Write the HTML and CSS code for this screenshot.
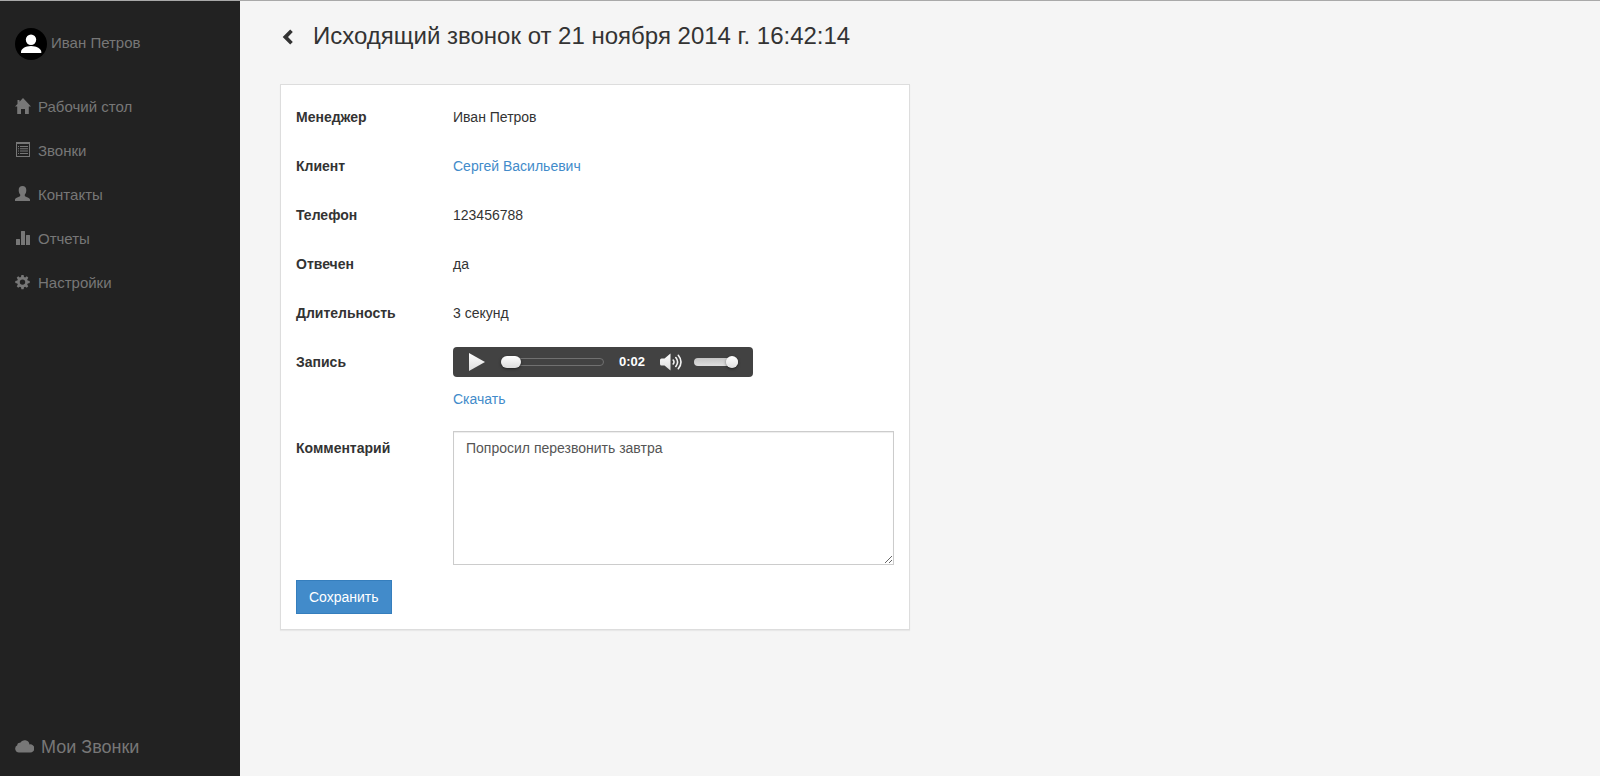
FILE: index.html
```html
<!DOCTYPE html>
<html lang="ru">
<head>
<meta charset="utf-8">
<meta name="viewport" content="width=device-width, initial-scale=1">
<title>Исходящий звонок</title>
<link rel="stylesheet" href="styles.css">
</head>
<body>
<div class="app">
  <aside class="sidebar">
    <a class="user" href="#">
      <svg class="avatar" viewBox="0 0 32 32" aria-hidden="true"><circle cx="16" cy="16" r="16" fill="#000"/><circle cx="16" cy="11.700" r="5.200" fill="#fff"/><path fill="#fff" d="M6 25v-1c0-3.200 4.400-6 10-6s10.300 2.800 10.300 6v1z"/></svg>
      <span>Иван Петров</span>
    </a>
    <nav class="nav">
      <a class="nav-link" href="#"><svg class="icon" viewBox="0 0 16 16" aria-hidden="true"><path d="M8 0l8 8.600h-2.200V16H10v-5H6v5H2.200V8.600H0L2.500 6V2h2v1.800z"/></svg>Рабочий стол</a>
      <a class="nav-link" href="#"><svg class="icon" viewBox="0 0 16 16" aria-hidden="true"><path fill-rule="evenodd" d="M1 0h14v15H1zM2 2v12h12V2zM3 4h1v1H3zM5 4h8v1H5zM3 6.300h1v1H3zM5 6.300h8v1H5zM3 8.600h1v1H3zM5 8.600h8v1H5zM3 10.900h1v1H3zM5 10.900h8v1H5z"/></svg>Звонки</a>
      <a class="nav-link" href="#"><svg class="icon" viewBox="0 0 16 16" aria-hidden="true"><path d="M7.500 0C9.800 0 11.300 1.600 11.300 4c0 2-.6 3.500-1.500 4.500v1.600c1.200 1 5.200 2 5.200 3.600V15H0v-1.300c0-1.600 4-2.600 5.200-3.600V8.500C4.300 7.500 3.700 6 3.700 4c0-2.400 1.500-4 3.800-4z"/></svg>Контакты</a>
      <a class="nav-link" href="#"><svg class="icon" viewBox="0 0 16 16" aria-hidden="true"><path d="M1.500 9h3q.5 0 .5.500V15H1V9.500Q1 9 1.500 9zM6.500 1h3q.5 0 .5.500V15H6V1.500Q6 1 6.500 1zM11.500 5h3q.5 0 .5.500V15h-4V5.500q0-.5.500-.5z"/></svg>Отчеты</a>
      <a class="nav-link" href="#"><svg class="icon" viewBox="0 0 16 16" aria-hidden="true"><path fill-rule="evenodd" d="M6.400 1h2.200l.4 1.900 1.200.5 1.600-1.100 1.500 1.500-1.100 1.600.5 1.200 2 .4v2.100l-2 .4-.5 1.200 1.100 1.600-1.500 1.500-1.600-1.100-1.200.5-.4 2H6.400l-.4-2-1.200-.5-1.600 1.100-1.500-1.500 1.100-1.600-.5-1.200-2-.4V7l2-.4.500-1.200-1.100-1.600 1.500-1.500 1.600 1.100L6 2.900zM7.500 5.400a2.700 2.700 0 1 0 0 5.400 2.700 2.700 0 0 0 0-5.400z"/></svg>Настройки</a>
    </nav>
    <a class="brand" href="#"><svg class="cloud" viewBox="0 0 19 13" aria-hidden="true"><path d="M4 12.500a3.800 3.800 0 0 1-1.700-7.200A2.300 2.300 0 0 1 5.200 2.800a5 5 0 0 1 9.300 1.600A4.100 4.100 0 1 1 15 12.500z"/></svg>Мои Звонки</a>
  </aside>

  <main class="main">
    <header class="heading">
      <a class="back" href="#" aria-label="Назад"><svg class="chevron" viewBox="0 0 12 16" aria-hidden="true"><path d="M8.200.5l2.600 2.600L6 8l4.800 4.900-2.600 2.600L.7 8z"/></svg></a>
      <h1 class="title">Исходящий звонок от 21 ноября 2014 г. 16:42:14</h1>
    </header>

    <form class="card">
      <div class="row"><span class="label">Менеджер</span><span class="value">Иван Петров</span></div>
      <div class="row"><span class="label">Клиент</span><span class="value"><a class="link" href="#">Сергей Васильевич</a></span></div>
      <div class="row"><span class="label">Телефон</span><span class="value">123456788</span></div>
      <div class="row"><span class="label">Отвечен</span><span class="value">да</span></div>
      <div class="row"><span class="label">Длительность</span><span class="value">3 секунд</span></div>
      <div class="row">
        <span class="label">Запись</span>
        <div class="record">
          <div class="player">
            <button class="player-button" type="button" aria-label="Воспроизвести">
              <svg class="play" viewBox="0 0 16 18" aria-hidden="true"><defs><linearGradient id="shine" x1="0" y1="0" x2="0" y2="1"><stop offset="0" stop-color="#fff"/><stop offset="1" stop-color="#dcdcdc"/></linearGradient></defs><path fill="url(#shine)" d="M0 0l16 9-16 9z"/></svg>
            </button>
            <input class="seek" type="range" min="0" max="100" value="0" aria-label="Позиция">
            <span class="time">0:02</span>
            <button class="player-button" type="button" aria-label="Выключить звук">
              <svg class="speaker" viewBox="0 0 22 18" aria-hidden="true"><path fill="url(#shine)" d="M10.500.5v17L4.500 12.500H1.500Q0 12.500 0 11V7Q0 5.500 1.500 5.500h3z"/><path fill="none" stroke="#f2f2f2" stroke-width="1.600" stroke-linecap="round" d="M13.200 7q1.600 2 0 4M15.800 4.600q3.600 4.400 0 8.800M18.300 2.300q5.400 6.700 0 13.400"/></svg>
            </button>
            <input class="volume" type="range" min="0" max="100" value="100" aria-label="Громкость">
          </div>
          <a class="link" href="#">Скачать</a>
        </div>
      </div>
      <div class="row">
        <label class="label" for="comment">Комментарий</label>
        <textarea class="comment" id="comment" rows="6">Попросил перезвонить завтра</textarea>
      </div>
      <button class="save" type="submit">Сохранить</button>
    </form>
  </main>
</div>
</body>
</html>
```
FILE: styles.css
```css
* {
  box-sizing: border-box;
}

body {
  margin: 0;
  background: #f5f5f5;
  color: #333;
  font: 14px/20px "Liberation Sans", Arial, sans-serif;
}

a {
  text-decoration: none;
}

.app {
  display: flex;
  min-height: 100vh;
  border-top: 1px solid #a9a9a9;
}

/* Sidebar */
.sidebar {
  display: flex;
  flex: none;
  flex-direction: column;
  width: 240px;
  padding: 27px 15px 19px;
  background: #222;
  font-size: 15px;
}

.sidebar a {
  color: #777;
}

.user {
  display: flex;
  align-items: center;
  gap: 4px;
}

.user span {
  padding-bottom: 2px;
}

.avatar {
  width: 32px;
  height: 32px;
}

.nav {
  display: flex;
  flex-direction: column;
  gap: 24px;
  margin-top: 37px;
}

.nav-link {
  display: flex;
  align-items: center;
  gap: 7px;
}

.icon {
  width: 16px;
  height: 16px;
  margin-bottom: 2px;
  fill: #777;
}

.brand {
  display: flex;
  align-items: center;
  gap: 7px;
  margin-top: auto;
  font-size: 18px;
}

.cloud {
  width: 19px;
  height: 13px;
  margin-bottom: 2px;
  fill: #777;
}

/* Call details */
.main {
  flex: 1;
  min-width: 0;
  padding: 20px 40px;
}

.heading {
  display: flex;
  align-items: center;
  gap: 19px;
  margin-bottom: 33px;
}

.back {
  display: flex;
  padding-left: 2px;
}

.chevron {
  width: 12px;
  height: 16px;
  margin-top: 2px;
  fill: #333;
}

.title {
  margin: 0;
  font-size: 24px;
  font-weight: 400;
  line-height: 30px;
}

.card {
  max-width: 630px;
  padding: 15px;
  border: 1px solid #ddd;
  background: #fff;
  box-shadow: 0 1px 1px rgba(0, 0, 0, 0.05);
}

.row {
  display: grid;
  grid-template-columns: 157px 1fr;
  align-items: start;
  margin-bottom: 15px;
}

.label {
  padding: 7px 0;
  font-weight: 700;
}

.value {
  padding: 7px 0;
}

.link {
  color: #428bca;
}

.record {
  display: flex;
  flex-direction: column;
  align-items: flex-start;
  gap: 12px;
  padding: 2px 0 7px;
}

.player {
  display: flex;
  align-items: center;
  width: 300px;
  height: 30px;
  padding: 0 15px 0 16px;
  border-radius: 4px;
  background: #424242;
}

.player-button {
  display: flex;
  padding: 0;
  border: 0;
  background: none;
}

.play {
  width: 16px;
  height: 18px;
}

.speaker {
  width: 22px;
  height: 18px;
}

.seek,
.volume {
  height: 12px;
  margin: 0;
  background: none;
  appearance: none;
}

.seek {
  flex: 1;
  min-width: 0;
  margin: 0 15px 0 16px;
}

.seek::-webkit-slider-runnable-track {
  height: 8px;
  border: 1px solid #707070;
  border-radius: 4px;
}

.seek::-webkit-slider-thumb {
  width: 20px;
  height: 12px;
  margin: -3px 0 0 -1px;
  border-radius: 6px;
  background: linear-gradient(#fff, #dcdcdc);
  box-shadow: 0 1px 3px rgba(0, 0, 0, 0.5);
  appearance: none;
}

.time {
  margin-right: 15px;
  color: #fff;
  font-size: 13px;
  font-weight: 700;
}

.volume {
  width: 44px;
  margin-left: 12px;
}

.volume::-webkit-slider-runnable-track {
  height: 8px;
  border-radius: 4px;
  background: linear-gradient(#c4c4c4, #dedede);
}

.volume::-webkit-slider-thumb {
  width: 12px;
  height: 12px;
  margin-top: -2px;
  border-radius: 50%;
  background: linear-gradient(#fff, #e0e0e0);
  box-shadow: 0 1px 3px rgba(0, 0, 0, 0.5);
  appearance: none;
}

.comment {
  display: block;
  width: 100%;
  padding: 6px 12px;
  border: 1px solid #ccc;
  border-radius: 0;
  background: #fff;
  box-shadow: inset 0 1px 1px rgba(0, 0, 0, 0.075);
  color: #555;
  font: inherit;
  resize: vertical;
}

.save {
  display: block;
  padding: 6px 12px;
  border: 1px solid #357ebd;
  background: #428bca;
  color: #fff;
  font: inherit;
}
```
